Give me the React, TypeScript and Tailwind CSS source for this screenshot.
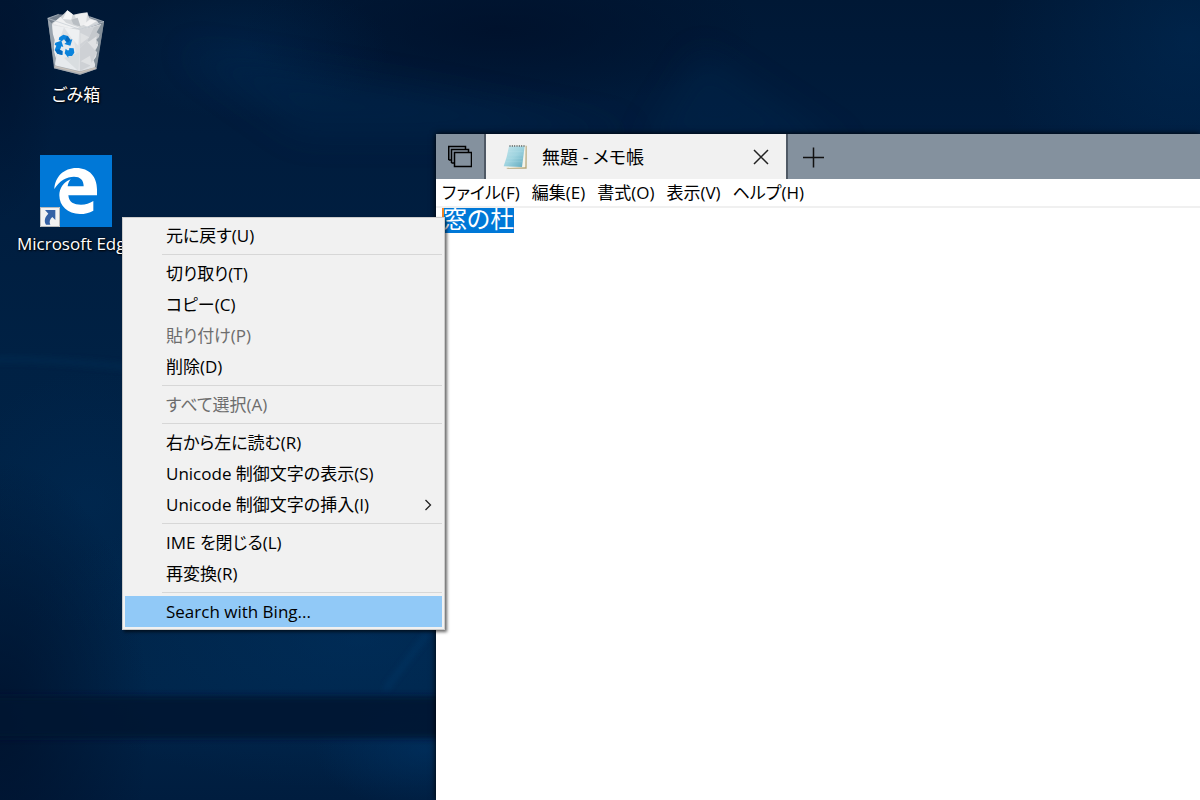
import { useEffect, useRef, useState } from "react";
import clsx from "clsx";

type MenuEntry = { label: string; disabled?: boolean; submenu?: boolean; active?: boolean };

const menuGroups: MenuEntry[][] = [
    [{ label: "元に戻す(U)" }],
    [
        { label: "切り取り(T)" },
        { label: "コピー(C)" },
        { label: "貼り付け(P)", disabled: true },
        { label: "削除(D)" },
    ],
    [{ label: "すべて選択(A)", disabled: true }],
    [
        { label: "右から左に読む(R)" },
        { label: "Unicode 制御文字の表示(S)" },
        { label: "Unicode 制御文字の挿入(I)", submenu: true },
    ],
    [{ label: "IME を閉じる(L)" }, { label: "再変換(R)" }],
    [{ label: "Search with Bing...", active: true }],
];

const menuBar = ["ファイル(F)", "編集(E)", "書式(O)", "表示(V)", "ヘルプ(H)"];

function Wallpaper() {
    return (
        <svg className="absolute inset-0 h-full w-full" viewBox="0 0 1200 800" preserveAspectRatio="none" aria-hidden="true">
            <defs>
                <linearGradient id="base" x1="0" y1="0" x2="0" y2="1">
                    <stop offset="0" stopColor="#001835" />
                    <stop offset="0.17" stopColor="#001c3d" />
                    <stop offset="0.45" stopColor="#002144" />
                    <stop offset="0.86" stopColor="#002448" />
                    <stop offset="1" stopColor="#001d3f" />
                </linearGradient>
                <radialGradient id="glow">
                    <stop offset="0" stopColor="#003a70" stopOpacity="0.7" />
                    <stop offset="1" stopColor="#003a70" stopOpacity="0" />
                </radialGradient>
                <radialGradient id="shade">
                    <stop offset="0" stopColor="#00102a" stopOpacity="0.8" />
                    <stop offset="1" stopColor="#00102a" stopOpacity="0" />
                </radialGradient>
                <filter id="soft" x="-10%" y="-50%" width="120%" height="200%">
                    <feGaussianBlur stdDeviation="3" />
                </filter>
                <filter id="haze" x="-50%" y="-100%" width="200%" height="300%">
                    <feGaussianBlur stdDeviation="16" />
                </filter>
            </defs>
            <rect width="1200" height="800" fill="url(#base)" />
            <ellipse cx="500" cy="30" rx="260" ry="80" fill="url(#shade)" />
            <ellipse cx="250" cy="50" rx="140" ry="70" fill="url(#glow)" opacity="0.3" />
            <ellipse cx="1190" cy="40" rx="200" ry="200" fill="url(#glow)" opacity="0.45" />
            <path d="M700 50 L850 150 H640Z" fill="#002a52" opacity="0.3" filter="url(#haze)" />
            <path d="M180 50 L420 90 L640 134 H300Z" fill="#002a52" opacity="0.35" filter="url(#haze)" />
            <path d="M-20 359 Q60 358 150 370" fill="none" stroke="#003058" strokeWidth="5" opacity="0.5" filter="url(#soft)" />
            <ellipse cx="90" cy="500" rx="130" ry="130" fill="url(#glow)" opacity="0.25" />
            <ellipse cx="360" cy="640" rx="340" ry="150" fill="url(#glow)" opacity="0.5" />
            <ellipse cx="425" cy="750" rx="110" ry="60" fill="url(#glow)" opacity="0.6" />
            <ellipse cx="0" cy="720" rx="150" ry="260" fill="url(#shade)" />
            <ellipse cx="0" cy="60" rx="60" ry="160" fill="url(#shade)" opacity="0.7" />
            <path d="M385 690 L428 633" stroke="#0a4478" strokeWidth="3" opacity="0.5" filter="url(#soft)" />
            <rect x="-20" y="696" width="1240" height="42" fill="#001430" opacity="0.9" filter="url(#soft)" />
        </svg>
    );
}

function RecycleBinIcon() {
    return (
        <svg className="h-[72px] w-[72px]" viewBox="120 18 216 216" aria-hidden="true">
            <path d="M143 55 L176 43 L270 50 L312 65 L290 207 L240 224 L162 205Z" fill="#76828f" />
            <path d="M155 70 L240 90 L303 72 L284 204 L240 217 L166 199Z" fill="#dfe1e4" />
            <path d="M155 70 L178 55 L188 45 L202 31 L220 44 L240 40 L262 37 L268 54 L291 62 L298 72 L240 92Z" fill="#d4d7da" />
            <path d="M202 31 L218 43 L214 59 L188 57Z" fill="#f5f6f6" />
            <path d="M224 45 L262 38 L258 72 L236 80Z" fill="#eeeff0" />
            <path d="M181 50 L198 68 L239 83 L206 84 L158 72Z" fill="#f0f1f2" />
            <path d="M214 59 L233 53 L242 80 L220 73Z" fill="#b9bec3" />
            <path d="M270 58 L290 63 L262 80 L250 74Z" fill="#f3f3f4" />
            <path d="M155 75 L192 82 L175 128 L166 180Z" fill="#edeff1" />
            <path d="M192 82 L238 90 L235 137 L214 114Z" fill="#eef0f2" />
            <path d="M176 126 L222 120 L236 213 L166 196Z" fill="#e7eaed" />
            <path d="M192 174 L238 157 L235 213Z" fill="#d9dde0" />
            <path d="M240 90 L282 80 L260 125 L240 143Z" fill="#d0d3d7" />
            <path d="M282 80 L302 75 L293 133 L261 124Z" fill="#c5c9cd" />
            <path d="M240 143 L261 124 L291 157 L270 198 L240 213Z" fill="#ced1d5" />
            <path d="M241 98 L268 112 L241 132Z M264 127 L290 109 L286 151Z M242 184 L270 167 L277 199Z" fill="#dfe1e3" />
            <path d="M304 72 L290 97 L302 106 L289 119 L298 131 L286 151 L295 161 L281 181 L289 203 L312 66Z" fill="#84909a" />
            <path d="M143 56 L156 72 L158 100 L164 120 L160 150 L168 175 L163 200Z" fill="#9aa4ae" />
            <path d="M162 205 L240 224 L290 207 L287 201 L240 214 L163 196Z" fill="#a9adb2" />
            <path d="M165 200 L240 218 L286 204" fill="none" stroke="#c9c1b9" strokeWidth="4" />
            <path d="M143 55 L240 88 L312 65 M268 50 L312 65 M143 55 L176 43" fill="none" stroke="#c3cad1" strokeWidth="2" />
            <g fill="#0a83dc">
                <path d="M178 112 L190 104 L204 108 L211 119 L217 118 L211 137 L193 132 L199 127 L192 118 L185 124 L176 119Z" />
                <path d="M166 128 L184 122 L190 141 L184 139 L180 150 L188 153 L187 165 L172 161 L164 150 L169 137 L164 134Z" />
                <path d="M197 146 L202 151 L207 151 L208 144 L221 145 L223 158 L216 168 L205 168 L205 173 L194 160Z" />
            </g>
            <path d="M166 150 L177 148 L187 154 L187 165 L172 161Z M201 108 L211 119 L204 128 L196 121Z" fill="#0669bd" />
        </svg>
    );
}

function EdgeIcon() {
    return (
        <svg className="h-[72px] w-[72px]" viewBox="120 45 216 216" aria-hidden="true">
            <rect x="120" y="45" width="216" height="216" fill="#0078d7" />
            <path
                d="M163 147 C165 110 192 84 229 84 C268 84 291 110 291 148 V166 H205 C207 188 222 194 243 194 C257 194 269 190 280 183 V212 C268 219 254 222 240 222 C203 222 178 198 178 166 C178 146 190 127 212 118 C207 124 204 130 203 139 H251 C251 120 241 110 222 110 C200 110 178 122 163 147Z"
                fill="#fff"
            />
            <rect x="120" y="201" width="60" height="60" fill="#f2f2f2" />
            <path d="M120 202.5 H178.5 V259.5 H121.5 V202" fill="none" stroke="#b7b9bb" strokeWidth="3" />
            <path d="M135 210 H166 V240 L157 231 C149 238 147 246 151 254 H138 C131 243 135 230 145 221Z" fill="#3461a5" />
        </svg>
    );
}

function NotepadIcon() {
    return (
        <svg className="h-7 w-7" viewBox="213 54 84 84" aria-hidden="true">
            <defs>
                <linearGradient id="pad" x1="0" y1="0" x2="1" y2="1">
                    <stop offset="0" stopColor="#c5e6ec" />
                    <stop offset="0.5" stopColor="#9ed3df" />
                    <stop offset="1" stopColor="#5fa8bd" />
                </linearGradient>
            </defs>
            <path d="M240 62 H287 V131 H230 L226 129Z" fill="#b5a679" />
            <path d="M238 61 H284 L283 127 L222 129Z" fill="#f5f3e9" />
            <path d="M234 64 H281 L273 126 L218 124 Q228 98 234 64Z" fill="url(#pad)" />
            <path d="M232 80 H278 M229 90 H277 M226 100 H275 M223 110 H273" stroke="#cdebf0" strokeWidth="1.5" opacity="0.3" />
            <path d="M237 60 V66 M244 60 V66 M251 60 V66 M258 60 V66 M265 60 V66 M272 60 V66 M279 60 V66" stroke="#6c7478" strokeWidth="3" />
        </svg>
    );
}

function DesktopIcon({ label, children }: { label: string; children: React.ReactNode }) {
    return (
        <button className="flex flex-col items-center gap-1.5">
            {children}
            <span className="text-[17px] leading-[22px] whitespace-nowrap text-white [text-shadow:1px_1px_2px_#000,0_0_2px_#000]">
                {label}
            </span>
        </button>
    );
}

function NotepadWindow() {
    const [text, setText] = useState("窓の杜");
    const editorRef = useRef<HTMLTextAreaElement>(null);

    useEffect(() => {
        editorRef.current?.focus({ preventScroll: true });
        editorRef.current?.select();
    }, []);

    return (
        <section className="absolute top-[134px] right-0 bottom-0 left-[436px] flex flex-col bg-white shadow-[0_0_6px_#000]">
            <div className="flex h-[45px] shrink-0 bg-[#84919e]">
                <button aria-label="Tabs" className="flex w-[50px] items-center justify-center border-r-2 border-[#4f5965]">
                    <svg className="h-6 w-6" viewBox="0 0 24 24" fill="none" stroke="#000" strokeWidth="1.5" aria-hidden="true">
                        <path d="M6.5 7.5 H23.5 V21.5 H6.5Z M3.5 18 V4.5 H20.5 V7 M3.5 18 H6 M.75 15 V1.5 H17.5 V4 M.75 15 H3" />
                    </svg>
                </button>
                <div className="flex w-[300px] items-center bg-[#f1f1f1] pr-4 pl-4">
                    <NotepadIcon />
                    <span className="flex-1 pl-3 text-lg leading-6">無題 - メモ帳</span>
                    <button aria-label="Close">
                        <svg className="h-[18px] w-[18px]" viewBox="0 0 18 18" stroke="#222" strokeWidth="1.5" aria-hidden="true">
                            <path d="M2 2 L16 16 M16 2 L2 16" />
                        </svg>
                    </button>
                </div>
                <button aria-label="New tab" className="flex w-[54px] items-center justify-center border-l-2 border-[#4f5965]">
                    <svg className="h-[22px] w-[22px]" viewBox="0 0 22 22" stroke="#111" strokeWidth="1.5" aria-hidden="true">
                        <path d="M0 11.5 H21 M10.5 1.5 V21.5" />
                    </svg>
                </button>
            </div>
            <nav className="flex h-[29px] shrink-0 items-center gap-3 border-b-2 border-[#f0f0f0] pl-1.5">
                {menuBar.map((item) => (
                    <button key={item} className="text-[17px] leading-6 whitespace-nowrap">
                        {item}
                    </button>
                ))}
            </nav>
            <div className="relative flex flex-1">
                <textarea
                    ref={editorRef}
                    aria-label="無題"
                    spellCheck={false}
                    value={text}
                    onChange={(e) => setText(e.target.value)}
                    className="flex-1 resize-none bg-white pl-[7px] font-['Liberation_Sans','Noto_Sans_CJK_JP',sans-serif] text-2xl leading-6 outline-none selection:bg-[#0078d7] selection:text-white"
                />
                <span className="absolute top-0 left-1.5 h-6 w-0.5 bg-[#f58220]" />
            </div>
        </section>
    );
}

function ContextMenu() {
    return (
        <div
            role="menu"
            className="absolute top-[217px] left-[122px] w-[323px] border border-[#cccccc] bg-[#f1f1f1] p-0.5 shadow-[2px_2px_3px_rgba(0,0,0,0.6)]"
        >
            {menuGroups.map((group, i) => (
                <div key={i}>
                    {i > 0 && <hr className="my-[3px] ml-[37px] border-[#d7d7d7]" />}
                    {group.map((entry) => (
                        <button
                            key={entry.label}
                            role="menuitem"
                            disabled={entry.disabled}
                            className={clsx(
                                "flex h-[31px] w-full items-center justify-between pr-2 pl-[41px] text-[17px] leading-6 whitespace-nowrap",
                                entry.disabled ? "text-[#6d6d6d]" : "text-black",
                                entry.active && "bg-[#91c9f7]"
                            )}
                        >
                            {entry.label}
                            {entry.submenu && (
                                <svg className="h-3 w-3" viewBox="0 0 12 12" fill="none" stroke="#222" strokeWidth="1.3" aria-hidden="true">
                                    <path d="M3.5 1 L8.5 6 L3.5 11" />
                                </svg>
                            )}
                        </button>
                    ))}
                </div>
            ))}
        </div>
    );
}

export default function App() {
    return (
        <main
            lang="ja"
            className="relative min-h-screen overflow-hidden bg-[#001c3d] font-['Open_Sans','Noto_Sans_CJK_JP',sans-serif] text-black [font-feature-settings:'palt']"
        >
            <Wallpaper />
            <div className="relative flex w-[152px] flex-col items-center gap-[49px] pt-1.5">
                <DesktopIcon label="ごみ箱">
                    <RecycleBinIcon />
                </DesktopIcon>
                <DesktopIcon label="Microsoft Edge">
                    <EdgeIcon />
                </DesktopIcon>
            </div>
            <NotepadWindow />
            <ContextMenu />
        </main>
    );
}
